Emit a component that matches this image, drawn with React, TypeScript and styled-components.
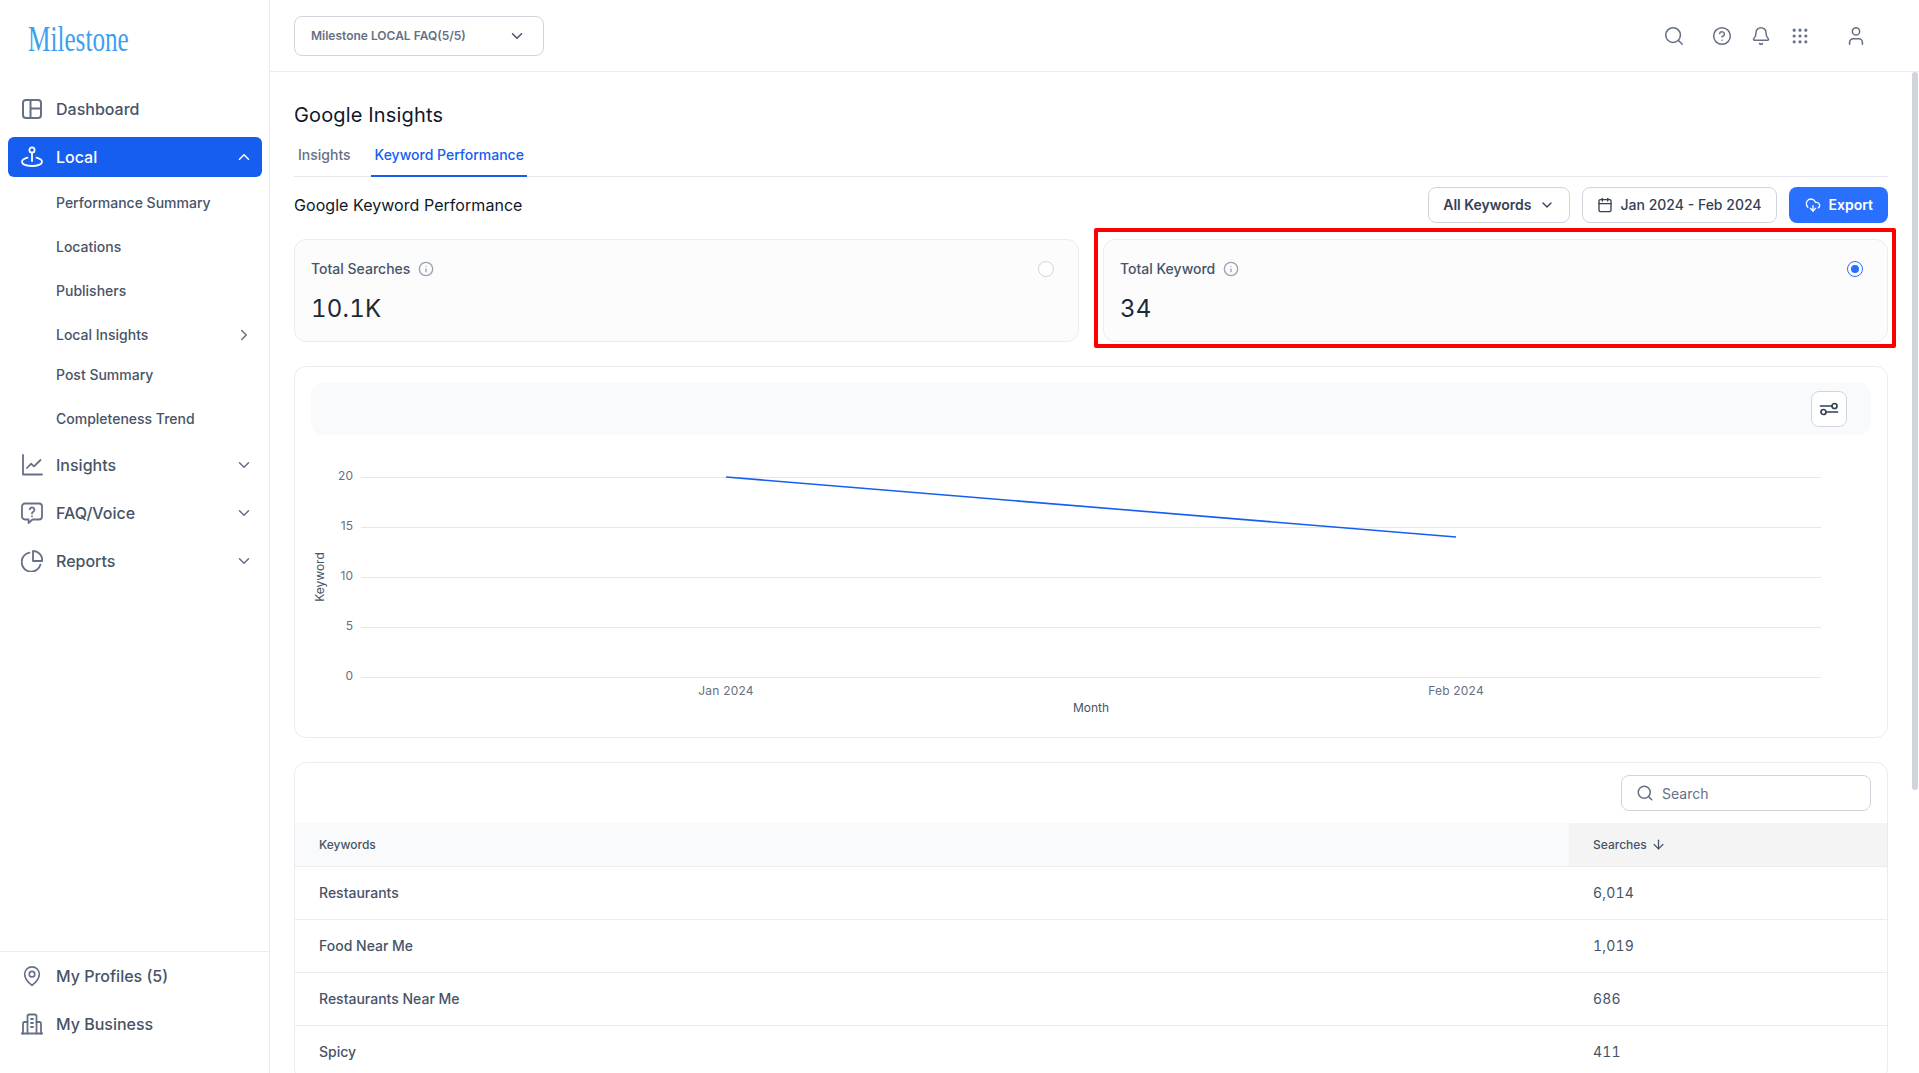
import { ReactNode } from 'react';
import styled, { createGlobalStyle } from 'styled-components';
import {
  ArrowDown,
  Bell,
  Calendar,
  ChevronDown,
  ChevronRight,
  ChevronUp,
  CircleHelp,
  CloudDownload,
  Grip,
  Info,
  MapPin,
  Search,
  User,
} from 'lucide-react';

const GlobalStyle = createGlobalStyle`
  html, body {
    margin: 0;
    padding: 0;
    height: 100%;
    overflow: hidden;
    background: #fff;
    font-family: Inter, "Liberation Sans", sans-serif;
  }
  * { box-sizing: border-box; }
`;

const DashboardIcon = () => (
  <svg width="22" height="22" viewBox="0 0 22 22" fill="none" stroke="currentColor" strokeWidth="2">
    <rect x="2" y="2" width="18" height="18" rx="3" />
    <path d="M9.5 2v18M9.5 10.5H20" />
  </svg>
);

const LocalIcon = () => (
  <svg width="22" height="22" viewBox="0 0 22 22" fill="none" stroke="currentColor" strokeWidth="1.8" strokeLinecap="round">
    <circle cx="11" cy="4" r="2.6" />
    <path d="M11 6.8V15" />
    <path d="M6.5 11.6C3.2 12.4 1 13.8 1 15.8 1 18.4 5.5 20 11 20s10-1.6 10-4.2c0-2-2.2-3.4-5.5-4.2" />
  </svg>
);

const InsightsIcon = () => (
  <svg width="22" height="22" viewBox="0 0 22 22" fill="none" stroke="currentColor" strokeWidth="1.8" strokeLinecap="round" strokeLinejoin="round">
    <path d="M2 1v19.5h19" />
    <path d="M6 14l4-4.2 3 2.6 6.5-6.4" />
  </svg>
);

const FaqIcon = () => (
  <svg width="22" height="22" viewBox="0 0 22 22" fill="none" stroke="currentColor" strokeWidth="1.8" strokeLinecap="round" strokeLinejoin="round">
    <path d="M4 1.5h14a3 3 0 0 1 3 3v10a3 3 0 0 1-3 3h-6.5L7.5 21v-3.500H4a3 3 0 0 1-3-3v-10a3 3 0 0 1 3-3z" />
    <path d="M8.800 7.400a2.300 2.300 0 1 1 3.400 2.300c-.8.400-1.200.9-1.200 1.700" />
    <path d="M11 14.200v.1" />
  </svg>
);

const ReportsIcon = () => (
  <svg width="22" height="22" viewBox="0 0 22 22" fill="none" stroke="currentColor" strokeWidth="1.8" strokeLinecap="round" strokeLinejoin="round">
    <path d="M8.500 2.600a9.600 9.600 0 1 0 11 12" />
    <path d="M12 1a9.200 9.200 0 0 1 9.200 9.200V11H12z" />
  </svg>
);

const BusinessIcon = () => (
  <svg width="22" height="22" viewBox="0 0 22 22" fill="none" stroke="currentColor" strokeWidth="1.800" strokeLinecap="round">
    <path d="M0.500 20.500h21" />
    <path d="M6.500 20.500V3a1.500 1.500 0 0 1 1.500-1.500h6A1.500 1.500 0 0 1 15.500 3v17.500" />
    <path d="M6.500 9H3.500a1.500 1.500 0 0 0-1.500 1.500v10M15.500 9h3a1.500 1.500 0 0 1 1.500 1.500v10" />
    <path d="M10 6h2M10 10h2M10 14h2" />
  </svg>
);

const FilterIcon = () => (
  <svg width="20" height="20" viewBox="0 0 20 20" fill="none" stroke="currentColor" strokeWidth="1.7" strokeLinecap="round">
    <path d="M1.500 7h11" />
    <circle cx="15.500" cy="7" r="2.500" />
    <circle cx="4.500" cy="13" r="2.500" />
    <path d="M7.500 13h11" />
  </svg>
);

function NavRow({ icon, label, active, trailing, sub, tight }: {
  icon?: ReactNode;
  label: string;
  active?: boolean;
  trailing?: ReactNode;
  sub?: boolean;
  tight?: boolean;
}) {
  if (sub) {
    return (
      <SubItem $tight={tight}>
        <SubLabel>{label}</SubLabel>
        {trailing}
      </SubItem>
    );
  }
  return (
    <NavItem $active={active}>
      <NavIcon $active={active}>{icon}</NavIcon>
      <NavLabel>{label}</NavLabel>
      {trailing}
    </NavItem>
  );
}

const keywords = [
  { name: 'Restaurants', searches: '6,014' },
  { name: 'Food Near Me', searches: '1,019' },
  { name: 'Restaurants Near Me', searches: '686' },
  { name: 'Spicy', searches: '411' },
];

const yTicks = [
  { label: '20', y: 42 },
  { label: '15', y: 92 },
  { label: '10', y: 142 },
  { label: '5', y: 192 },
  { label: '0', y: 242 },
];

function KeywordChart() {
  return (
    <ChartSvg viewBox="0 0 1592 302" width="1592" height="302">
      {yTicks.map(({ label, y }) => (
        <g key={label}>
          <line x1="66" x2="1526" y1={y + 0.5} y2={y + 0.5} stroke="#e4e7ec" strokeWidth="1" />
          <text x="58" y={y + 3} textAnchor="end" fontSize="12" fill="#667085">{label}</text>
        </g>
      ))}
      <polyline points="431,42 1161,102" fill="none" stroke="#155eef" strokeWidth="1.6" />
      <text x="431" y="260" textAnchor="middle" fontSize="12" letterSpacing="0.2" fill="#667085">Jan 2024</text>
      <text x="1161" y="260" textAnchor="middle" fontSize="12" letterSpacing="0.2" fill="#667085">Feb 2024</text>
      <text x="796" y="277" textAnchor="middle" fontSize="12" fill="#475467">Month</text>
      <text x="0" y="0" transform="translate(29 142) rotate(-90)" textAnchor="middle" fontSize="12" fill="#475467">Keyword</text>
    </ChartSvg>
  );
}

export default function App() {
  return (
    <Shell>
      <GlobalStyle />
      <Sidebar>
        <LogoBar>
          <Logo>Milestone</Logo>
        </LogoBar>
        <Nav>
          <NavRow icon={<DashboardIcon />} label="Dashboard" />
          <NavRow icon={<LocalIcon />} label="Local" active trailing={<ChevronUp size={18} />} />
          <SubMenu>
            <NavRow sub label="Performance Summary" />
            <NavRow sub label="Locations" />
            <NavRow sub label="Publishers" />
            <NavRow sub tight label="Local Insights" trailing={<ChevronRight size={18} color="#667085" />} />
            <NavRow sub label="Post Summary" />
            <NavRow sub label="Completeness Trend" />
          </SubMenu>
          <NavRow icon={<InsightsIcon />} label="Insights" trailing={<ChevronDown size={18} color="#667085" />} />
          <NavRow icon={<FaqIcon />} label="FAQ/Voice" trailing={<ChevronDown size={18} color="#667085" />} />
          <NavRow icon={<ReportsIcon />} label="Reports" trailing={<ChevronDown size={18} color="#667085" />} />
        </Nav>
        <SideFooter>
          <NavRow icon={<MapPin size={22} strokeWidth={1.8} />} label="My Profiles (5)" />
          <NavRow icon={<BusinessIcon />} label="My Business" />
        </SideFooter>
      </Sidebar>

      <Main>
        <TopBar>
          <ProfileSelect>
            <span>Milestone LOCAL FAQ(5/5)</span>
            <ChevronDown size={18} color="#475467" />
          </ProfileSelect>
          <TopIcons>
            <TopIcon $offset={0}><Search size={22} strokeWidth={1.7} /></TopIcon>
            <TopIcon $offset={27}><CircleHelp size={20} strokeWidth={1.8} /></TopIcon>
            <TopIcon $offset={19}><Bell size={20} strokeWidth={1.8} /></TopIcon>
            <TopIcon $offset={19}><Grip size={20} strokeWidth={1.8} /></TopIcon>
            <TopIcon $offset={35}><User size={22} strokeWidth={1.7} /></TopIcon>
          </TopIcons>
        </TopBar>

        <Content>
          <ScrollThumb />
          <PageTitle>Google Insights</PageTitle>
          <Tabs>
            <Tab>Insights</Tab>
            <Tab $active>Keyword Performance</Tab>
          </Tabs>

          <SectionRow>
            <SectionTitle>Google Keyword Performance</SectionTitle>
            <Actions>
              <OutlineButton $strong>
                All Keywords
                <ChevronDown size={16} />
              </OutlineButton>
              <OutlineButton>
                <Calendar size={16} />
                Jan 2024 - Feb 2024
              </OutlineButton>
              <ExportButton>
                <CloudDownload size={16} />
                Export
              </ExportButton>
            </Actions>
          </SectionRow>

          <StatGrid>
            <StatCard>
              <StatHead>
                <StatLabel>Total Searches<Info size={16} color="#98a2b3" /></StatLabel>
                <Radio />
              </StatHead>
              <StatValue>10.1K</StatValue>
            </StatCard>
            <StatCard>
              <RedMark />
              <StatHead>
                <StatLabel>Total Keyword<Info size={16} color="#98a2b3" /></StatLabel>
                <Radio $checked />
              </StatHead>
              <StatValue>34</StatValue>
            </StatCard>
          </StatGrid>

          <ChartCard>
            <ChartToolbar>
              <FilterButton><FilterIcon /></FilterButton>
            </ChartToolbar>
            <KeywordChart />
          </ChartCard>

          <TableCard>
            <TableTools>
              <SearchBox>
                <Search size={18} />
                Search
              </SearchBox>
            </TableTools>
            <TableHead>
              <HeadCell>Keywords</HeadCell>
              <HeadCell $sorted>Searches<ArrowDown size={15} /></HeadCell>
            </TableHead>
            {keywords.map(({ name, searches }) => (
              <TableRow key={name}>
                <NameCell>{name}</NameCell>
                <CountCell>{searches}</CountCell>
              </TableRow>
            ))}
          </TableCard>
        </Content>
      </Main>
    </Shell>
  );
}

const Shell = styled.div`
  display: flex;
  height: 100vh;
  overflow: hidden;
`;

const Sidebar = styled.aside`
  display: flex;
  flex-direction: column;
  flex: 0 0 270px;
  border-right: 1px solid #eaecf0;
  background: #fff;
`;

const LogoBar = styled.div`
  display: flex;
  align-items: center;
  height: 78px;
  padding-left: 28px;
`;

const Logo = styled.div`
  font-family: "Liberation Serif", serif;
  font-size: 36px;
  line-height: 1;
  color: #3d9ff2;
  transform: scaleX(0.7);
  transform-origin: left center;
`;

const Nav = styled.nav`
  display: flex;
  flex-direction: column;
  flex: 1;
  gap: 8px;
  padding-top: 11px;
`;

const NavItem = styled.div<{ $active?: boolean }>`
  display: flex;
  align-items: center;
  flex: 0 0 40px;
  margin: 0 7px 0 8px;
  padding: 0 9px 0 13px;
  border-radius: 6px;
  background: ${({ $active }) => ($active ? '#155eef' : 'transparent')};
  color: ${({ $active }) => ($active ? '#fff' : '#475467')};
`;

const NavIcon = styled.span<{ $active?: boolean }>`
  display: flex;
  align-items: center;
  justify-content: center;
  flex: 0 0 22px;
  margin-right: 13px;
  color: ${({ $active }) => ($active ? '#fff' : '#667085')};
`;

const NavLabel = styled.span`
  flex: 1;
  font-size: 16px;
  font-weight: 500;
`;

const SubMenu = styled.div`
  display: flex;
  flex-direction: column;
  margin: -4px 0;
`;

const SubItem = styled.div<{ $tight?: boolean }>`
  display: flex;
  align-items: center;
  justify-content: space-between;
  height: ${({ $tight }) => ($tight ? '36px' : '44px')};
  margin-top: ${({ $tight }) => ($tight ? '4px' : '0')};
  padding: 0 16px 0 56px;
  font-size: 14px;
  font-weight: 500;
  color: #475467;
`;

const SubLabel = styled.span`
  padding-bottom: 2px;
`;

const SideFooter = styled.div`
  display: flex;
  flex-direction: column;
  gap: 8px;
  padding: 4px 0 29px;
  border-top: 1px solid #eaecf0;
`;

const Main = styled.main`
  display: flex;
  flex-direction: column;
  flex: 1;
  min-width: 0;
`;

const TopBar = styled.header`
  display: flex;
  align-items: center;
  justify-content: space-between;
  flex: 0 0 72px;
  padding: 0 52px 0 24px;
  border-bottom: 1px solid #eaecf0;
`;

const ProfileSelect = styled.div`
  display: flex;
  align-items: center;
  justify-content: space-between;
  width: 250px;
  height: 40px;
  padding: 0 17px 0 16px;
  border: 1px solid #d0d5dd;
  border-radius: 8px;
  font-size: 12px;
  font-weight: 600;
  color: #667085;
`;

const TopIcons = styled.div`
  display: flex;
  align-items: center;
`;

const TopIcon = styled.span<{ $offset: number }>`
  display: flex;
  margin-left: ${({ $offset }) => $offset}px;
  color: #667085;
`;

const Content = styled.div`
  position: relative;
  flex: 1;
  min-height: 0;
  overflow: hidden;
  padding: 29px 31px 0 24px;
`;

const ScrollThumb = styled.div`
  position: absolute;
  top: 0;
  right: 1px;
  width: 6px;
  height: 718px;
  border-radius: 4px;
  background: #d0d5dd;
`;

const PageTitle = styled.h1`
  margin: 0;
  font-size: 20px;
  font-weight: 400;
  line-height: 28px;
  letter-spacing: 0.15px;
  color: #101828;
`;

const Tabs = styled.div`
  display: flex;
  gap: 16px;
  margin-top: 8px;
  border-bottom: 1px solid #e4e7ec;
`;

const Tab = styled.div<{ $active?: boolean }>`
  height: 40px;
  margin-bottom: -1px;
  padding: 8px ${({ $active }) => ($active ? '3px' : '4px')} 0 4px;
  border-bottom: 2px solid ${({ $active }) => ($active ? '#155eef' : 'transparent')};
  font-size: 14px;
  font-weight: 500;
  line-height: 20px;
  color: ${({ $active }) => ($active ? '#155eef' : '#667085')};
`;

const SectionRow = styled.div`
  display: flex;
  align-items: center;
  justify-content: space-between;
  margin-top: 10px;
`;

const SectionTitle = styled.h2`
  margin: 0;
  font-size: 16px;
  font-weight: 400;
  letter-spacing: 0.05px;
  color: #101828;
`;

const Actions = styled.div`
  display: flex;
  gap: 12px;
`;

const OutlineButton = styled.div<{ $strong?: boolean }>`
  display: flex;
  align-items: center;
  gap: ${({ $strong }) => ($strong ? '7px' : '8px')};
  height: 36px;
  padding: 0 14px 1px;
  border: 1px solid #d0d5dd;
  border-radius: 8px;
  background: #fff;
  font-size: 14px;
  font-weight: ${({ $strong }) => ($strong ? 600 : 500)};
  color: #344054;
`;

const ExportButton = styled.div`
  display: flex;
  align-items: center;
  gap: 8px;
  height: 36px;
  padding: 0 15px 1px 16px;
  border-radius: 8px;
  background: #2970ff;
  font-size: 14px;
  font-weight: 600;
  color: #fff;
`;

const StatGrid = styled.div`
  display: grid;
  grid-template-columns: 1fr 1fr;
  gap: 24px;
  margin-top: 16px;
`;

const StatCard = styled.div`
  position: relative;
  height: 103px;
  padding: 19px 24px 0 16px;
  border: 1px solid #eaecf0;
  border-radius: 12px;
  background: #fcfcfd;
`;

const RedMark = styled.div`
  position: absolute;
  top: -12px;
  left: -10px;
  right: -9px;
  bottom: -7px;
  border: 4px solid #ff0000;
  border-radius: 2px;
  pointer-events: none;
`;

const StatHead = styled.div`
  display: flex;
  align-items: center;
  justify-content: space-between;
  height: 20px;
`;

const StatLabel = styled.div`
  display: flex;
  align-items: center;
  gap: 8px;
  padding-bottom: 1px;
  font-size: 14px;
  font-weight: 500;
  color: #475467;
`;

const Radio = styled.span<{ $checked?: boolean }>`
  display: flex;
  align-items: center;
  justify-content: center;
  width: 16px;
  height: 16px;
  border: 1px solid ${({ $checked }) => ($checked ? '#2970ff' : '#d0d5dd')};
  border-radius: 50%;
  background: #fff;

  &::after {
    content: '';
    display: ${({ $checked }) => ($checked ? 'block' : 'none')};
    width: 8px;
    height: 8px;
    border-radius: 50%;
    background: #2970ff;
  }
`;

const StatValue = styled.div`
  margin-top: 14px;
  font-size: 24px;
  font-weight: 400;
  line-height: 32px;
  font-variant-numeric: tabular-nums;
  letter-spacing: 0.2px;
  color: #1d2939;
`;

const ChartCard = styled.section`
  height: 372px;
  margin-top: 24px;
  padding: 16px 0 0;
  border: 1px solid #eaecf0;
  border-radius: 12px;
  background: #fff;
`;

const ChartToolbar = styled.div`
  display: flex;
  align-items: center;
  justify-content: flex-end;
  height: 52px;
  margin: 0 16px;
  padding-right: 24px;
  border-radius: 12px;
  background: #f9fafb;
`;

const FilterButton = styled.div`
  display: flex;
  align-items: center;
  justify-content: center;
  width: 36px;
  height: 36px;
  border: 1px solid #d0d5dd;
  border-radius: 8px;
  background: #fff;
  color: #344054;
`;

const ChartSvg = styled.svg`
  display: block;
  font-family: Inter, "Liberation Sans", sans-serif;
`;

const TableCard = styled.section`
  margin-top: 24px;
  border: 1px solid #eaecf0;
  border-radius: 12px;
  background: #fff;
  overflow: hidden;
`;

const TableTools = styled.div`
  display: flex;
  justify-content: flex-end;
  padding: 12px 16px;
`;

const SearchBox = styled.div`
  display: flex;
  align-items: center;
  gap: 8px;
  width: 250px;
  height: 36px;
  padding: 0 14px;
  border: 1px solid #d0d5dd;
  border-radius: 8px;
  font-size: 14px;
  color: #667085;
`;

const TableHead = styled.div`
  display: grid;
  grid-template-columns: 1fr 318px;
  height: 44px;
  border-bottom: 1px solid #eaecf0;
  background: #f9fafb;
`;

const HeadCell = styled.div<{ $sorted?: boolean }>`
  display: flex;
  align-items: center;
  gap: 4px;
  padding-left: 24px;
  background: ${({ $sorted }) => ($sorted ? '#f4f4f5' : 'transparent')};
  font-size: 12px;
  font-weight: 500;
  color: #475467;
`;

const TableRow = styled.div`
  display: grid;
  grid-template-columns: 1fr 318px;
  align-items: center;
  height: 53px;
  border-bottom: 1px solid #eaecf0;
`;

const NameCell = styled.div`
  padding: 0 0 2px 24px;
  font-size: 14px;
  font-weight: 500;
  color: #475467;
`;

const CountCell = styled.div`
  padding: 0 0 2px 24px;
  font-size: 14px;
  font-variant-numeric: tabular-nums;
  letter-spacing: 0.2px;
  color: #475467;
`;
